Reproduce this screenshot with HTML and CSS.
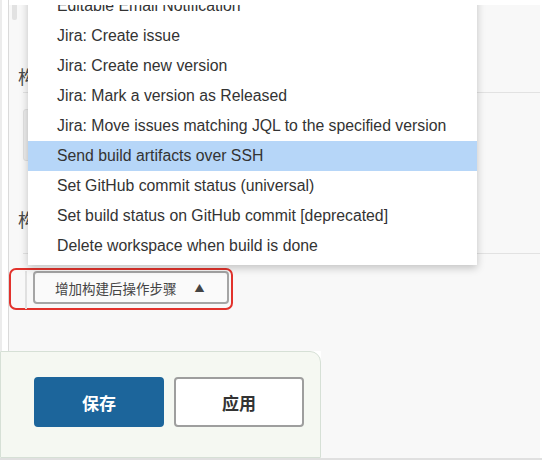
FILE: index.html
```html
<!DOCTYPE html>
<html lang="zh-CN">
<head>
    <meta charset="UTF-8">
    <meta name="viewport" content="width=device-width, initial-scale=1.0">
    <title>Jenkins - 构建后操作</title>
    <link rel="stylesheet" href="styles.css">
</head>
<body>
    <div class="page">
        <div class="top">
            <div class="gutter"></div>
            <div class="main">
                <div class="stub"></div>
                <div class="section">
                    <h3 class="section-title">构建后操作</h3>
                </div>
                <div class="section tall">
                    <div class="field"></div>
                    <h3 class="section-title">构建后操作</h3>
                </div>
                <div class="actions">
                    <div class="highlight">
                        <div class="rule"></div>
                        <button class="add-step">增加构建后操作步骤 <span class="caret">&#9650;</span></button>
                    </div>
                </div>

                <!-- dropdown opened from the add-step button -->
                <ul class="menu">
                    <li>Editable Email Notification</li>
                    <li>Jira: Create issue</li>
                    <li>Jira: Create new version</li>
                    <li>Jira: Mark a version as Released</li>
                    <li>Jira: Move issues matching JQL to the specified version</li>
                    <li class="active">Send build artifacts over SSH</li>
                    <li>Set GitHub commit status (universal)</li>
                    <li>Set build status on GitHub commit [deprecated]</li>
                    <li>Delete workspace when build is done</li>
                </ul>
            </div>
        </div>

        <div class="bottom">
            <div class="bottom-bar">
                <button class="btn btn-primary">保存</button>
                <button class="btn">应用</button>
            </div>
            <div class="bottom-rest"></div>
        </div>
    </div>
</body>
</html>
```

FILE: styles.css
```css
* {
    margin: 0;
    padding: 0;
    box-sizing: border-box;
}

body {
    font-family: 'Liberation Sans', 'Noto Sans CJK SC', sans-serif;
    background: #ffffff;
    color: #333;
    width: 542px;
    height: 463px;
    overflow: hidden;
}

.page {
    display: flex;
    flex-direction: column;
    height: 463px;
    padding-bottom: 3px;
}

.top {
    display: flex;
    height: 351px;
}

.gutter {
    width: 9px;
    background: #fff;
    border-left: 2px solid #ececec;
    border-right: 1px solid #dadada;
}

.main {
    position: relative;
    flex: 1;
    overflow: hidden;
    background: #f8f8f8;
    border-right: 2px solid #fff;
    border-top: 5px solid #fff;
}

.stub {
    width: 5px;
    height: 15px;
    margin-left: 3px;
    background: #e2e2e2;
    border-radius: 0 0 2px 2px;
}

.section {
    height: 73px;
    border-bottom: 1px solid #e2e2e2;
    margin-left: 14px;
}

.section.tall {
    height: 145px;
}

.section-title {
    width: 10px;
    overflow: hidden;
    white-space: nowrap;
    font-family: 'Noto Sans CJK SC', sans-serif;
    font-size: 18px;
    font-weight: normal;
    line-height: 22px;
    color: #4a4a4a;
    margin-left: -5px;
    padding-top: 45px;
}

.section.tall .section-title {
    padding-top: 47px;
}

.field {
    width: 300px;
    height: 52px;
    margin-top: 16px;
    background: #ececec;
    border: 1px solid #e0e0e0;
    border-radius: 3px;
}

.actions {
    padding-top: 14px;
}

.highlight {
    display: flex;
    align-items: flex-start;
    gap: 6px;
    width: 224px;
    height: 42px;
    padding: 1px 0 0 14px;
    border: 2px solid #e2322c;
    border-radius: 7px;
}

.rule {
    width: 2px;
    height: 38px;
    background: #e0e0e0;
}

.add-step {
    display: flex;
    align-items: center;
    gap: 18px;
    width: 196px;
    height: 33px;
    padding-left: 20px;
    font-family: 'Noto Sans CJK SC', sans-serif;
    font-size: 13.5px;
    color: #444;
    background: #fafafa;
    border: 2px solid #a5a5a5;
    border-radius: 4px;
}

.caret {
    font-size: 10px;
    color: #444;
}

.menu {
    position: absolute;
    left: 19px;
    top: -14px;
    width: 449px;
    list-style: none;
    background: #fff;
    padding-bottom: 4px;
    box-shadow: 0 3px 8px rgba(0, 0, 0, 0.22);
}

.menu li {
    height: 30px;
    line-height: 30px;
    padding-left: 29px;
    font-size: 15.8px;
    color: #333;
    white-space: nowrap;
}

.menu li.active {
    background: #b6d6f8;
}

.bottom {
    display: flex;
    flex: 1;
    border-bottom: 2px solid #e0e0e0;
}

.bottom-bar {
    display: flex;
    align-items: flex-start;
    gap: 10px;
    width: 321px;
    padding: 25px 0 0 33px;
    background: #f5f8f2;
    border: 1px solid #d6e0d6;
    border-radius: 0 11px 0 0;
}

.bottom-rest {
    flex: 1;
    background: #f8f8f8;
    border-right: 2px solid #fff;
}

.btn {
    width: 130px;
    height: 50px;
    font-family: 'Noto Sans CJK SC', sans-serif;
    font-size: 17px;
    font-weight: bold;
    color: #333;
    background: #fff;
    border: 2px solid #9e9e9e;
    border-radius: 4px;
}

.btn-primary {
    color: #fff;
    background: #1c659b;
    border-color: #1c659b;
}
```
